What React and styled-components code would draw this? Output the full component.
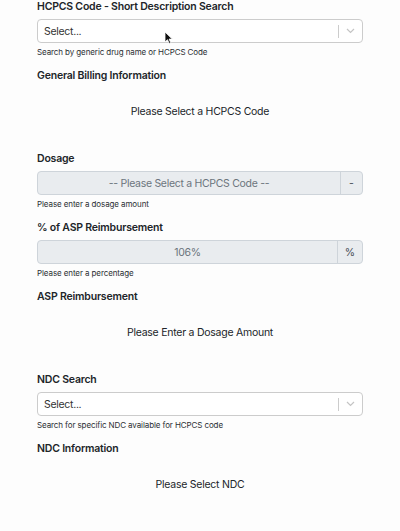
import React from "react";
import styled, { createGlobalStyle } from "styled-components";

const GlobalStyle = createGlobalStyle`
  html, body {
    margin: 0;
    padding: 0;
    background: #fdfdfd;
  }

  body {
    font-family: Inter, "Noto Sans", "Liberation Sans", sans-serif;
    color: #212529;
  }
`;

const Page = styled.div`
  position: relative;
  width: 400px;
  height: 531px;
  overflow: hidden;
`;

const Container = styled.div`
  width: 326px;
  margin: 0 auto;
`;

const Section = styled.section`
  margin-bottom: 12px;
`;

const Label = styled.div`
  font-size: 10.5px;
  font-weight: 600;
  line-height: 14px;
  margin-bottom: 5px;
  letter-spacing: -0.2px;
`;

const Helper = styled.div`
  font-size: 8px;
  line-height: 10px;
  margin-top: 4px;
  color: #2b2f33;
  letter-spacing: -0.1px;
`;

const SelectBox = styled.div`
  display: flex;
  align-items: center;
  height: 24px;
  box-sizing: border-box;
  border: 1px solid #cccccc;
  border-radius: 4px;
  background: #fff;
`;

const SelectValue = styled.div`
  flex: 1;
  padding-left: 6px;
  font-size: 10.5px;
  letter-spacing: -0.3px;
  color: #333;
`;

const Separator = styled.span`
  width: 1px;
  height: 13px;
  background: #cccccc;
`;

const Chevron = styled.div`
  width: 23px;
  display: flex;
  justify-content: center;
  align-items: center;
`;

const InputGroup = styled.div`
  display: flex;
  height: 24px;
  box-sizing: border-box;
  border: 1px solid #ced4da;
  border-radius: 4px;
  background: #e9ecef;
  overflow: hidden;
`;

const InputValue = styled.div`
  flex: 1;
  display: flex;
  align-items: center;
  justify-content: center;
  font-size: 10.5px;
  letter-spacing: -0.3px;
  color: #6c757d;
`;

const Append = styled.div`
  width: ${(p) => p.$width}px;
  border-left: 1px solid #ced4da;
  display: flex;
  align-items: center;
  justify-content: center;
  font-size: 10.5px;
  color: #495057;
`;

const InfoBody = styled.div`
  padding: 17px 0 21px;
  text-align: center;
  font-size: 10.5px;
  letter-spacing: -0.25px;
  line-height: 14px;
  color: #212529;
`;

const Cursor = styled.svg`
  position: absolute;
  left: 164px;
  top: 31px;
`;

const Select = () => (
  <SelectBox>
    <SelectValue>Select...</SelectValue>
    <Separator />
    <Chevron>
      <svg width="9" height="6" viewBox="0 0 9 6">
        <path d="M1 1l3.5 3.5L8 1" fill="none" stroke="#c4c4c4" strokeWidth="1.2" />
      </svg>
    </Chevron>
  </SelectBox>
);

const Field = ({ label, help, children }) => (
  <Section>
    <Label>{label}</Label>
    {children}
    <Helper>{help}</Helper>
  </Section>
);

const Info = ({ label, text }) => (
  <Section>
    <Label>{label}</Label>
    <InfoBody>{text}</InfoBody>
  </Section>
);

export default function App() {
  return (
    <Page>
      <GlobalStyle />
      <Container>
        <Field label="HCPCS Code - Short Description Search" help="Search by generic drug name or HCPCS Code">
          <Select />
        </Field>
        <Info label="General Billing Information" text="Please Select a HCPCS Code" />
        <Field label="Dosage" help="Please enter a dosage amount">
          <InputGroup>
            <InputValue>-- Please Select a HCPCS Code --</InputValue>
            <Append $width={21}>-</Append>
          </InputGroup>
        </Field>
        <Field label="% of ASP Reimbursement" help="Please enter a percentage">
          <InputGroup>
            <InputValue>106%</InputValue>
            <Append $width={24}>%</Append>
          </InputGroup>
        </Field>
        <Info label="ASP Reimbursement" text="Please Enter a Dosage Amount" />
        <Field label="NDC Search" help="Search for specific NDC available for HCPCS code">
          <Select />
        </Field>
        <Info label="NDC Information" text="Please Select NDC" />
      </Container>
      <Cursor width="9" height="13" viewBox="0 0 9 13">
        <path d="M1 1v10l2.5-2.3 1.7 3.8 1.6-.7-1.7-3.7H8.3z" fill="#111" stroke="#fff" strokeWidth="0.8" />
      </Cursor>
    </Page>
  );
}
